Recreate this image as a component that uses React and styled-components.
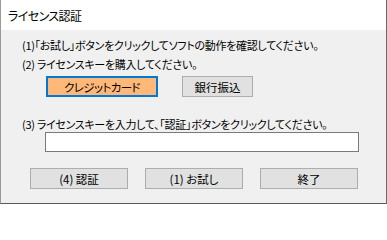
import React from 'react'
import styled, { createGlobalStyle } from 'styled-components'

const GlobalStyle = createGlobalStyle`
  html, body { margin: 0; padding: 0; background: #ffffff; overflow: hidden; }
  body { font-family: "Noto Sans CJK JP", "Noto Sans", sans-serif; }
`

const Dialog = styled.div`
  width: 387px;
  height: 204px;
  box-sizing: border-box;
  border-left: 1px solid #9a9a9a;
  border-right: 1px solid #6a6a6a;
  border-bottom: 1px solid #5a5a5a;
  display: flex;
  flex-direction: column;
  overflow: hidden;
  font-feature-settings: "palt";
`

const TitleBar = styled.div`
  height: 30px;
  flex: none;
  background: #ffffff;
  display: flex;
  align-items: center;
  padding-left: 7px;
  font-size: 12px;
  letter-spacing: -0.6px;
  color: #000;
`

const Body = styled.div`
  flex: 1;
  background: #f0f0f0;
  padding: 6px 0 0 21px;
  display: flex;
  flex-direction: column;
  font-size: 11px;
  letter-spacing: -0.3px;
  color: #000;
`

const Line = styled.div`
  height: ${p => p.h || 18}px;
  line-height: ${p => p.h || 18}px;
  margin-top: ${p => p.top || 0}px;
  white-space: nowrap;
`

const Row = styled.div`
  display: flex;
  gap: ${p => p.gap || 0}px;
  margin-top: ${p => p.top || 0}px;
  margin-left: ${p => p.left || 0}px;
`

const Button = styled.div`
  width: ${p => p.w}px;
  height: 21px;
  box-sizing: border-box;
  background: ${p => (p.active ? '#ffb878' : '#e1e1e1')};
  border: ${p => (p.active ? '2px solid #0078d7' : '1px solid #adadad')};
  display: flex;
  align-items: center;
  justify-content: center;
  font-size: 11.5px;
  letter-spacing: ${p => (p.active ? '-0.6px' : '0')};
  white-space: nowrap;
`

const KeyInput = styled.div`
  width: 314px;
  height: 20px;
  box-sizing: border-box;
  margin: 0 0 0 23px;
  background: #ffffff;
  border: 1px solid #7a7a7a;
`

export default function App() {
  return (
    <>
      <GlobalStyle />
      <Dialog>
        <TitleBar>ライセンス認証</TitleBar>
        <Body>
          <Line>(1)「お試し」ボタンをクリックしてソフトの動作を確認してください。</Line>
          <Line top={1}>(2) ライセンスキーを購入してください。</Line>
          <Row top={3} left={24} gap={24}>
            <Button w={112} active>クレジットカード</Button>
            <Button w={71}>銀行振込</Button>
          </Row>
          <Line top={19} h={16}>(3) ライセンスキーを入力して、「認証」ボタンをクリックしてください。</Line>
          <KeyInput />
          <Row top={16} left={8} gap={17}>
            <Button w={98}>(4) 認証</Button>
            <Button w={98}>(1) お試し</Button>
            <Button w={98}>終了</Button>
          </Row>
        </Body>
      </Dialog>
    </>
  )
}
